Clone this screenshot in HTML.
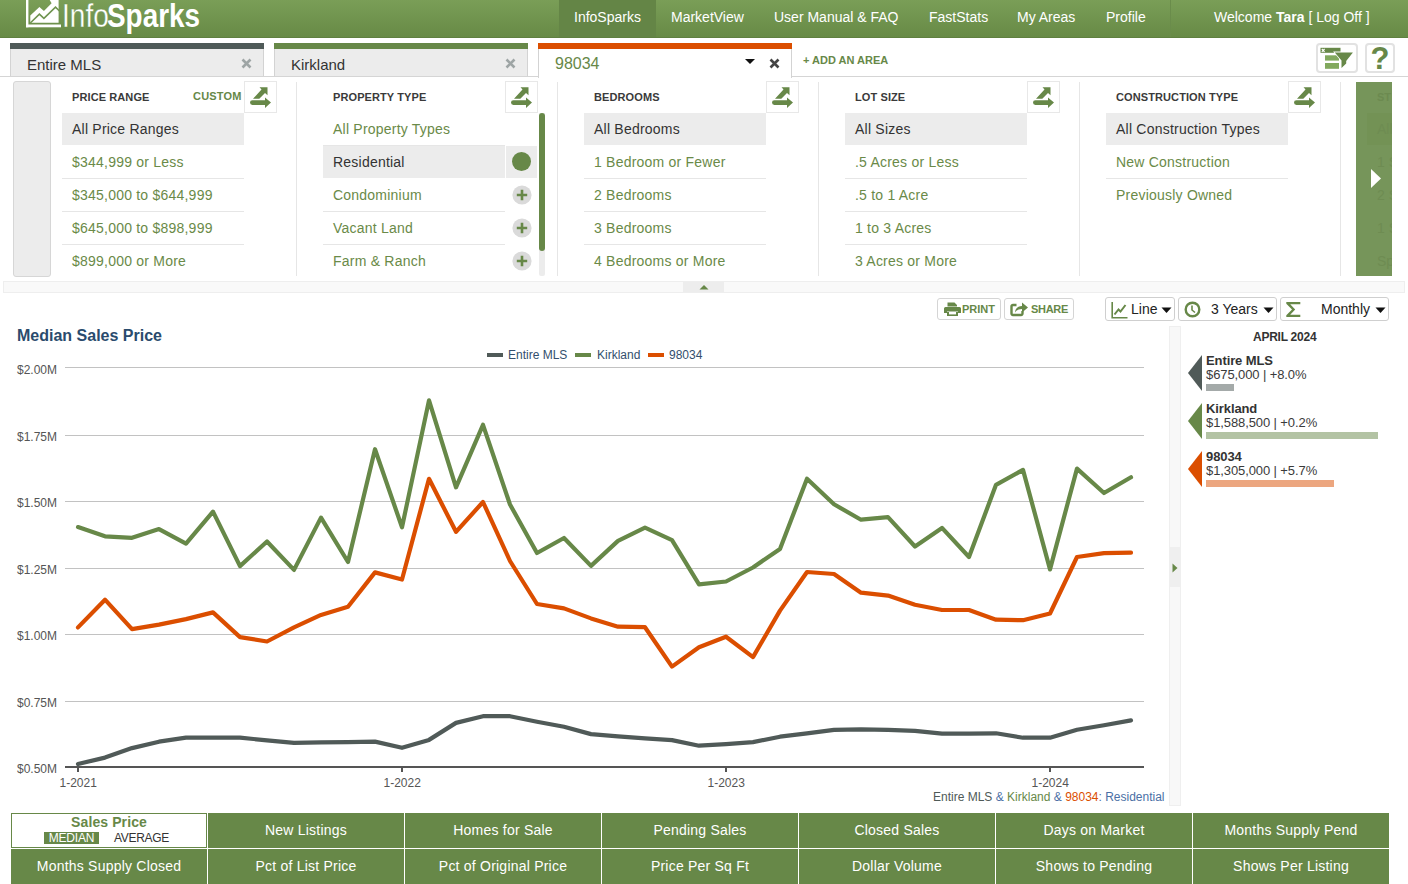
<!DOCTYPE html>
<html><head><meta charset="utf-8">
<style>
*{box-sizing:border-box;margin:0;padding:0}
html,body{width:1408px;height:884px;overflow:hidden;background:#fff;font-family:"Liberation Sans",sans-serif;color:#333}
.a{position:absolute}
#hdr{left:0;top:0;width:1408px;height:38px;background:linear-gradient(#7a9e57,#678a46);border-bottom:1px solid #5f8040}
.nav{top:0;height:37px;line-height:35px;font-size:14px;color:#fff;white-space:nowrap}
.tab{top:43px;width:254px;height:33px;border-top:6px solid #4f5a58;background:#ececec;box-shadow:inset 1px 0 #d3d3d3,inset -1px 0 #d3d3d3}
.tab span{position:absolute;left:17px;top:7px;font-size:15px;color:#333}
.tabx{position:absolute;font-size:15px;color:#9ea5a5;font-weight:bold}
.col{top:82px;height:195px}
.hd{font-size:11px;font-weight:bold;letter-spacing:.1px;color:#3a3a3a;white-space:nowrap}
.row{height:33px;line-height:33px;font-size:14px;letter-spacing:.22px;color:#6a8a48;white-space:nowrap;border-bottom:1px solid #e6e6e6;padding-left:10px}
.row.sel{background:#ececec;color:#333;border-bottom-color:#fff}
.row.last{border-bottom:none}
.ibtn{width:33px;height:32px;border:1px solid #e8e8e8;background:#fff}
.sep{width:1px;background:#e6e6e6;top:82px;height:194px}
.btn{top:298px;height:22px;border:1px solid #d5d5d5;border-radius:3px;background:#fff}
.dd{top:297px;height:24px;border:1px solid #cfcfcf;border-radius:3px;background:#fff;font-size:14px;color:#222}
.ax{font-size:12px;color:#555;white-space:nowrap}
.gb{height:35px;background:#678848;color:#fff;font-size:14px;letter-spacing:.22px;text-align:center;line-height:35px;white-space:nowrap}
</style></head><body>
<div id="hdr" class="a"></div>

<svg class="a" style="left:0;top:0" width="62" height="30" viewBox="0 0 62 30">
<rect x="26" y="0" width="2.4" height="27.3" fill="#fff"/>
<rect x="26" y="24.5" width="35" height="2.8" fill="#fff"/>
<polygon fill="#fff" points="30.3,15.5 39.4,6.9 43.9,10.9 51.6,3.2 49.7,0 58.6,0 58.6,22.8 30.3,22.8"/>
<polyline fill="none" stroke="#6f9450" stroke-width="1.6" points="30.3,23 39.4,14.2 43.9,18.3 55.5,7.2 59.5,11"/>
</svg>
<div class="a" style="left:62px;top:-4px;height:40px;white-space:nowrap;color:#fff;font-size:33px;line-height:40px;transform:scaleX(.85);transform-origin:0 0;-webkit-text-stroke:.35px #719550">Info</div>
<div class="a" style="left:107px;top:-4px;height:40px;white-space:nowrap;color:#fff;font-size:33px;line-height:40px;font-weight:bold;transform:scaleX(.845);transform-origin:0 0">Sparks</div>
<div class="a" style="left:559px;top:0;width:97px;height:37px;background:#648546"></div>
<div class="a nav" style="left:574px">InfoSparks</div>
<div class="a nav" style="left:671px">MarketView</div>
<div class="a nav" style="left:774px">User Manual &amp; FAQ</div>
<div class="a nav" style="left:929px">FastStats</div>
<div class="a nav" style="left:1017px">My Areas</div>
<div class="a nav" style="left:1106px">Profile</div>
<div class="a" style="left:1170px;top:0;width:1px;height:37px;background:#6a8c4b"></div>
<div class="a nav" style="left:1214px">Welcome <b>Tara</b> [ Log Off ]</div>

<div class="a" style="left:0;top:76px;width:1408px;height:1px;background:#d5d5d5"></div>
<div class="a tab" style="left:10px"><span>Entire MLS</span><svg class="a" style="left:231px;top:8.5px" width="11" height="11" viewBox="0 0 11 11"><path d="M1.5,1.5 L9.5,9.5 M9.5,1.5 L1.5,9.5" stroke="#9ea5a5" stroke-width="2.6"/></svg></div>
<div class="a tab" style="left:274px;border-top-color:#678848"><span>Kirkland</span><svg class="a" style="left:231px;top:8.5px" width="11" height="11" viewBox="0 0 11 11"><path d="M1.5,1.5 L9.5,9.5 M9.5,1.5 L1.5,9.5" stroke="#9ea5a5" stroke-width="2.6"/></svg></div>
<div class="a tab" style="left:538px;border-top-color:#db4e00;background:#fff;height:35px"><span style="color:#678848;font-size:16px;top:5.5px">98034</span>
<svg class="a" style="left:206px;top:9px" width="12" height="8" viewBox="0 0 12 8"><polygon points="1,1 11,1 6,6" fill="#111"/></svg>
<svg class="a" style="left:231px;top:8.5px" width="11" height="11" viewBox="0 0 11 11"><path d="M1.5,1.5 L9.5,9.5 M9.5,1.5 L1.5,9.5" stroke="#444" stroke-width="2.6"/></svg></div>
<div class="a" style="left:803px;top:54px;font-size:11px;font-weight:bold;color:#678848;letter-spacing:0;white-space:nowrap">+ ADD AN AREA</div>
<div class="a" style="left:1316px;top:43px;width:42px;height:30px;border:2px solid #e2e2e2;border-radius:4px;background:#fff">
<svg class="a" style="left:-2px;top:-2px" width="41" height="30" viewBox="0 0 41 30">
<rect x="4.5" y="4.8" width="20" height="5" fill="#678848"/>
<path d="M5.8,6 L8.6,8.8 M8.6,6 L5.8,8.8" stroke="#fff" stroke-width="1.1"/>
<rect x="9" y="12.3" width="14" height="5.3" fill="#82a95e"/>
<rect x="9" y="20" width="14" height="5.8" fill="#82a95e"/>
<polygon points="18.8,9.4 36.9,9.4 30.2,18 30.2,20.4 25.5,25 25.5,17.6" fill="#678848" stroke="#fff" stroke-width="1.6" stroke-linejoin="miter"/>
<polygon points="18.8,9.4 36.9,9.4 30.2,18 30.2,20.4 25.5,25 25.5,17.6" fill="#678848"/>
</svg></div>
<div class="a" style="left:1365px;top:43px;width:30px;height:30px;border:2px solid #e2e2e2;border-radius:4px;background:#fff;text-align:center;font-size:31px;font-weight:bold;color:#678848;line-height:28px">?</div>
<div class="a" style="left:13px;top:81px;width:38px;height:196px;background:#ececec;border:1px solid #d6d6d6;border-radius:3px"></div>
<div class="a hd" style="left:72px;top:91px">PRICE RANGE</div>
<div class="a ibtn" style="left:244px;top:81px"><svg width="33" height="32" viewBox="0 0 33 32" style="position:absolute;left:-1px;top:-1px"><polygon fill="#678848" points="9,17.8 15.3,17.8 21,12 23.5,14.2 23.5,6.3 15.5,6.3 17.5,8.5"/><path fill="#678848" d="M8.4,19.2 H21 V16.5 L27,21.6 L21,27 V24 H8.4 A2.4,2.4 0 0 1 8.4,19.2 Z"/></svg></div>
<div class="a" style="left:62px;top:113px;width:182px"><div class="row sel">All Price Ranges</div><div class="row">$344,999 or Less</div><div class="row">$345,000 to $644,999</div><div class="row">$645,000 to $898,999</div><div class="row last">$899,000 or More</div></div>
<div class="a sep" style="left:296px"></div>
<div class="a hd" style="left:333px;top:91px">PROPERTY TYPE</div>
<div class="a ibtn" style="left:505px;top:81px"><svg width="33" height="32" viewBox="0 0 33 32" style="position:absolute;left:-1px;top:-1px"><polygon fill="#678848" points="9,17.8 15.3,17.8 21,12 23.5,14.2 23.5,6.3 15.5,6.3 17.5,8.5"/><path fill="#678848" d="M8.4,19.2 H21 V16.5 L27,21.6 L21,27 V24 H8.4 A2.4,2.4 0 0 1 8.4,19.2 Z"/></svg></div>
<div class="a" style="left:323px;top:113px;width:182px"><div class="row">All Property Types</div><div class="row sel">Residential</div><div class="row">Condominium</div><div class="row">Vacant Land</div><div class="row last">Farm &amp; Ranch</div></div>
<div class="a sep" style="left:557px"></div>
<div class="a hd" style="left:594px;top:91px">BEDROOMS</div>
<div class="a ibtn" style="left:766px;top:81px"><svg width="33" height="32" viewBox="0 0 33 32" style="position:absolute;left:-1px;top:-1px"><polygon fill="#678848" points="9,17.8 15.3,17.8 21,12 23.5,14.2 23.5,6.3 15.5,6.3 17.5,8.5"/><path fill="#678848" d="M8.4,19.2 H21 V16.5 L27,21.6 L21,27 V24 H8.4 A2.4,2.4 0 0 1 8.4,19.2 Z"/></svg></div>
<div class="a" style="left:584px;top:113px;width:182px"><div class="row sel">All Bedrooms</div><div class="row">1 Bedroom or Fewer</div><div class="row">2 Bedrooms</div><div class="row">3 Bedrooms</div><div class="row last">4 Bedrooms or More</div></div>
<div class="a sep" style="left:818px"></div>
<div class="a hd" style="left:855px;top:91px">LOT SIZE</div>
<div class="a ibtn" style="left:1027px;top:81px"><svg width="33" height="32" viewBox="0 0 33 32" style="position:absolute;left:-1px;top:-1px"><polygon fill="#678848" points="9,17.8 15.3,17.8 21,12 23.5,14.2 23.5,6.3 15.5,6.3 17.5,8.5"/><path fill="#678848" d="M8.4,19.2 H21 V16.5 L27,21.6 L21,27 V24 H8.4 A2.4,2.4 0 0 1 8.4,19.2 Z"/></svg></div>
<div class="a" style="left:845px;top:113px;width:182px"><div class="row sel">All Sizes</div><div class="row">.5 Acres or Less</div><div class="row">.5 to 1 Acre</div><div class="row">1 to 3 Acres</div><div class="row last">3 Acres or More</div></div>
<div class="a sep" style="left:1079px"></div>
<div class="a hd" style="left:1116px;top:91px">CONSTRUCTION TYPE</div>
<div class="a ibtn" style="left:1288px;top:81px"><svg width="33" height="32" viewBox="0 0 33 32" style="position:absolute;left:-1px;top:-1px"><polygon fill="#678848" points="9,17.8 15.3,17.8 21,12 23.5,14.2 23.5,6.3 15.5,6.3 17.5,8.5"/><path fill="#678848" d="M8.4,19.2 H21 V16.5 L27,21.6 L21,27 V24 H8.4 A2.4,2.4 0 0 1 8.4,19.2 Z"/></svg></div>
<div class="a" style="left:1106px;top:113px;width:182px"><div class="row sel">All Construction Types</div><div class="row">New Construction</div><div class="row last">Previously Owned</div></div>
<div class="a sep" style="left:1340px"></div>
<div class="a" style="left:193px;top:90px;font-size:11px;font-weight:bold;color:#678848;letter-spacing:.2px">CUSTOM</div>
<div class="a" style="left:506px;top:146px;width:31px;height:32px;background:#ececec"></div>
<div class="a" style="left:512px;top:152px;width:19px;height:19px;border-radius:50%;background:#678848"></div>
<svg class="a" style="left:511.5px;top:185px" width="20" height="20" viewBox="0 0 20 20"><circle cx="10" cy="10" r="9.6" fill="#dadada"/><path d="M10,4.8 V15.2 M4.8,10 H15.2" stroke="#678848" stroke-width="2.6"/></svg>
<svg class="a" style="left:511.5px;top:218px" width="20" height="20" viewBox="0 0 20 20"><circle cx="10" cy="10" r="9.6" fill="#dadada"/><path d="M10,4.8 V15.2 M4.8,10 H15.2" stroke="#678848" stroke-width="2.6"/></svg>
<svg class="a" style="left:511.5px;top:251px" width="20" height="20" viewBox="0 0 20 20"><circle cx="10" cy="10" r="9.6" fill="#dadada"/><path d="M10,4.8 V15.2 M4.8,10 H15.2" stroke="#678848" stroke-width="2.6"/></svg>
<div class="a" style="left:539px;top:113px;width:6px;height:163px;background:#ececec;border-radius:0 0 2px 2px"></div>
<div class="a" style="left:539px;top:113px;width:6px;height:138px;background:#678848;border-radius:3px"></div>
<div class="a" style="left:1356px;top:82px;width:36px;height:194px;background:#76955a;overflow:hidden;white-space:nowrap">
<div class="a" style="left:21px;top:9px;font-size:11px;font-weight:bold;color:#6c8a50">ST</div>
<div class="a" style="left:11px;top:31px;width:30px;height:32px;background:#739255"></div>
<div class="a" style="left:21px;top:39px;font-size:14px;color:#6e8c52">All</div>
<div class="a" style="left:21px;top:72px;font-size:14px;color:#6e8c52">1 S</div>
<div class="a" style="left:21px;top:105px;font-size:14px;color:#6e8c52">2 S</div>
<div class="a" style="left:21px;top:138px;font-size:14px;color:#6e8c52">1 S</div>
<div class="a" style="left:21px;top:171px;font-size:14px;color:#6e8c52">Sp</div>
<svg class="a" style="left:14px;top:86px" width="12" height="22" viewBox="0 0 12 22"><polygon points="1,1 11,10.5 1,20" fill="#fff"/></svg>
</div>
<div class="a" style="left:3px;top:281px;width:1402px;height:12px;background:#f9f9f9;border:1px solid #eeeeee"></div>
<div class="a" style="left:683px;top:282px;width:41px;height:10px;background:#ededed"></div>
<svg class="a" style="left:699px;top:284px" width="10" height="6" viewBox="0 0 10 6"><polygon points="0.5,5.5 9.5,5.5 5,1" fill="#678848"/></svg>

<div class="a btn" style="left:937px;width:64px">
<svg class="a" style="left:6px;top:2px" width="18" height="16" viewBox="0 0 18 16"><path fill="#678848" d="M3.5,1.5 H10.5 L13,4 V5.5 H3.5 Z M1.5,6 H15.5 A1.5,1.5 0 0 1 17,7.5 V12 H14 V10 H3 V12 H0 V7.5 A1.5,1.5 0 0 1 1.5,6 Z M3,10.5 H14 V15 H3 Z"/><rect x="5" y="11" width="7" height="2.4" fill="#fff"/></svg>
<div class="a" style="left:24px;top:4px;font-size:11px;font-weight:bold;color:#678848;letter-spacing:0">PRINT</div></div>
<div class="a btn" style="left:1004px;width:70px">
<svg class="a" style="left:5px;top:2px" width="19" height="16" viewBox="0 0 19 16"><path fill="none" stroke="#678848" stroke-width="2.4" d="M6.5,4 H3 A1.5,1.5 0 0 0 1.5,5.5 V12.5 A1.5,1.5 0 0 0 3,14 H11 A1.5,1.5 0 0 0 12.5,12.5 V10"/><path fill="#678848" d="M5,11.5 C5.5,7 8.5,5 12,5 V1.5 L18,6.5 L12,11.5 V8 C9,8 6.8,9 5,11.5 Z"/></svg>
<div class="a" style="left:26px;top:4px;font-size:11px;font-weight:bold;color:#678848;letter-spacing:-.3px">SHARE</div></div>
<div class="a dd" style="left:1105px;width:70px">
<svg class="a" style="left:5px;top:4px" width="17" height="17" viewBox="0 0 17 17"><path d="M1.2,0 V15.8 H16.5" fill="none" stroke="#678848" stroke-width="1.6"/><polyline points="3.5,12.5 7.5,7.5 9.5,9.5 14.5,3" fill="none" stroke="#678848" stroke-width="2"/></svg>
<div class="a" style="left:25px;top:3px">Line</div>
<svg class="a" style="left:55px;top:9px" width="11" height="7" viewBox="0 0 11 7"><polygon points="0.5,0.5 10.5,0.5 5.5,6" fill="#111"/></svg></div>
<div class="a dd" style="left:1178px;width:99px">
<svg class="a" style="left:5px;top:3px" width="17" height="17" viewBox="0 0 17 17"><circle cx="8.5" cy="8.5" r="6.8" fill="none" stroke="#678848" stroke-width="2.4"/><path d="M8,4.5 V9 L11,11.5" fill="none" stroke="#678848" stroke-width="1.6"/></svg>
<div class="a" style="left:32px;top:3px">3 Years</div>
<svg class="a" style="left:84px;top:9px" width="11" height="7" viewBox="0 0 11 7"><polygon points="0.5,0.5 10.5,0.5 5.5,6" fill="#111"/></svg></div>
<div class="a dd" style="left:1280px;width:109px">
<svg class="a" style="left:4px;top:2px" width="17" height="18" viewBox="0 0 17 18"><polygon fill="#678848" points="1.3,2 15.3,2 15.3,4.3 5.2,4.3 10.2,9.5 5.2,14.7 15.3,14.7 15.3,17 1.3,17 1.3,15.3 7,9.5 1.3,3.7"/></svg>
<div class="a" style="left:40px;top:3px">Monthly</div>
<svg class="a" style="left:94px;top:9px" width="11" height="7" viewBox="0 0 11 7"><polygon points="0.5,0.5 10.5,0.5 5.5,6" fill="#111"/></svg></div>

<div class="a" style="left:17px;top:327px;font-size:16px;font-weight:bold;color:#2a4b6d">Median Sales Price</div>
<div class="a" style="left:487px;top:353px;width:16px;height:4px;background:#505a58"></div>
<div class="a" style="left:508px;top:348px;font-size:12px;color:#334f6d">Entire MLS</div>
<div class="a" style="left:575px;top:353px;width:16px;height:4px;background:#678848"></div>
<div class="a" style="left:597px;top:348px;font-size:12px;color:#334f6d">Kirkland</div>
<div class="a" style="left:648px;top:353px;width:16px;height:4px;background:#db4e00"></div>
<div class="a" style="left:669px;top:348px;font-size:12px;color:#334f6d">98034</div>

<svg class="a" style="left:0;top:0" width="1160" height="884" viewBox="0 0 1160 884">
<g stroke="#c2c2c2" stroke-width="1"><line x1="65" y1="367.5" x2="1144" y2="367.5"/><line x1="65" y1="435.5" x2="1144" y2="435.5"/><line x1="65" y1="501.5" x2="1144" y2="501.5"/><line x1="65" y1="568.5" x2="1144" y2="568.5"/><line x1="65" y1="634.5" x2="1144" y2="634.5"/><line x1="65" y1="701.5" x2="1144" y2="701.5"/></g>
<line x1="65" y1="767" x2="1144" y2="767" stroke="#555" stroke-width="2.2"/>
<g stroke="#555" stroke-width="2"><line x1="78" y1="767" x2="78" y2="772"/><line x1="402" y1="767" x2="402" y2="772"/><line x1="726" y1="767" x2="726" y2="772"/><line x1="1050" y1="767" x2="1050" y2="772"/></g>
<g fill="none" stroke-width="4.2" stroke-linejoin="round" stroke-linecap="round">
<polyline stroke="#505a58" points="78,764.0 105,757.6 132,748.1 159,741.7 186,737.7 213,737.7 240,737.7 267,740.3 294,742.9 321,742.3 348,742.1 375,741.6 402,747.8 429,739.9 456,722.9 483,716.2 510,716.2 537,721.7 564,726.7 591,734.1 618,736.3 645,738.3 672,740.1 699,745.7 726,744.1 753,742.1 780,736.7 807,733.3 834,729.8 861,729.4 888,729.8 915,730.8 942,733.7 969,733.7 996,733.3 1023,737.7 1050,737.7 1077,729.8 1104,725.2 1131,720.4"/>
<polyline stroke="#678848" points="78,527.1 105,536.3 132,537.8 159,529.1 186,543.7 213,511.6 240,566.1 267,541.5 294,569.9 321,517.6 348,562.0 375,449.2 402,527.3 429,400.4 456,487.3 483,424.8 510,504.5 537,553.0 564,538.0 591,565.9 618,540.9 645,527.7 672,540.1 699,584.4 726,581.5 753,567.5 780,548.9 807,478.7 834,504.3 861,519.7 888,517.2 915,546.5 942,527.9 969,557.0 996,484.8 1023,469.9 1050,569.4 1077,468.6 1104,493.0 1131,477.3"/>
<polyline stroke="#db4e00" points="78,627.4 105,599.7 132,629.1 159,624.6 186,619.1 213,612.4 240,637.1 267,641.5 294,627.4 321,614.9 348,606.7 375,572.4 402,579.5 429,478.8 456,531.8 483,502.0 510,561.0 537,604.0 564,608.4 591,618.4 618,626.7 645,627.2 672,666.6 699,647.2 726,636.7 753,657.1 780,610.6 807,572.0 834,574.0 861,592.7 888,595.6 915,604.8 942,610.0 969,610.0 996,619.7 1023,620.2 1050,613.5 1077,557.0 1104,553.2 1131,552.7"/>
</g>
</svg>
<div class="a ax" style="left:17px;top:363px">$2.00M</div>
<div class="a ax" style="left:17px;top:430px">$1.75M</div>
<div class="a ax" style="left:17px;top:496px">$1.50M</div>
<div class="a ax" style="left:17px;top:563px">$1.25M</div>
<div class="a ax" style="left:17px;top:629px">$1.00M</div>
<div class="a ax" style="left:17px;top:696px">$0.75M</div>
<div class="a ax" style="left:17px;top:762px">$0.50M</div>
<div class="a ax" style="left:59.5px;top:776px">1-2021</div>
<div class="a ax" style="left:383.5px;top:776px">1-2022</div>
<div class="a ax" style="left:707.5px;top:776px">1-2023</div>
<div class="a ax" style="left:1031.5px;top:776px">1-2024</div>
<div class="a" style="left:933px;top:790px;font-size:12px;color:#4f5a58;white-space:nowrap">Entire MLS <span style="color:#4a6fa5">&amp;</span> <span style="color:#678848">Kirkland</span> <span style="color:#4a6fa5">&amp;</span> <span style="color:#db4e00">98034</span><span style="color:#4a6fa5">: Residential</span></div>

<div class="a" style="left:1169px;top:326px;width:12px;height:480px;background:#f8f8f8;border:1px solid #efefef"></div>
<div class="a" style="left:1170px;top:547px;width:10px;height:40px;background:#efefef"></div>
<svg class="a" style="left:1172px;top:563px" width="6" height="10" viewBox="0 0 6 10"><polygon points="0.5,0.5 5.5,5 0.5,9.5" fill="#678848"/></svg>

<div class="a" style="left:1253px;top:330px;font-size:12px;font-weight:bold;color:#333;letter-spacing:-.25px">APRIL 2024</div>
<svg class="a" style="left:1187px;top:354px" width="16" height="140" viewBox="0 0 16 140">
<polygon points="15,1 15,37 1,19" fill="#505a58"/>
<polygon points="15,49 15,85 1,67" fill="#678848"/>
<polygon points="15,97 15,133 1,115" fill="#db4e00"/>
</svg>
<div class="a" style="left:1206px;top:353px;font-size:13px;font-weight:bold;color:#333;line-height:16px;letter-spacing:-.1px">Entire MLS</div>
<div class="a" style="left:1206px;top:368px;font-size:13px;color:#3a3a3a;line-height:14px;letter-spacing:-.1px">$675,000 | +8.0%</div>
<div class="a" style="left:1206px;top:384px;width:28px;height:7px;background:#a4aaa9"></div>
<div class="a" style="left:1206px;top:401px;font-size:13px;font-weight:bold;color:#333;line-height:16px;letter-spacing:-.1px">Kirkland</div>
<div class="a" style="left:1206px;top:416px;font-size:13px;color:#3a3a3a;line-height:14px;letter-spacing:-.1px">$1,588,500 | +0.2%</div>
<div class="a" style="left:1206px;top:432px;width:172px;height:7px;background:#b3c3a4"></div>
<div class="a" style="left:1206px;top:449px;font-size:13px;font-weight:bold;color:#333;line-height:16px;letter-spacing:-.1px">98034</div>
<div class="a" style="left:1206px;top:464px;font-size:13px;color:#3a3a3a;line-height:14px;letter-spacing:-.1px">$1,305,000 | +5.7%</div>
<div class="a" style="left:1206px;top:480px;width:128px;height:7px;background:#eca67f"></div>
<div class="a" style="left:11px;top:813px;width:196px;height:35px;border:1px solid #678848;background:#fff">
<div class="a" style="left:0;top:0;width:194px;text-align:center;font-size:14px;font-weight:bold;color:#678848;letter-spacing:.1px">Sales Price</div>
<div class="a" style="left:32px;top:18px;width:55px;height:12px;background:#678848;color:#fff;font-size:12px;line-height:12px;text-align:center;letter-spacing:-.2px">MEDIAN</div>
<div class="a" style="left:102px;top:17px;font-size:12px;color:#333;line-height:14px;letter-spacing:-.3px">AVERAGE</div></div>
<div class="a gb" style="left:208px;top:813px;width:196px">New Listings</div>
<div class="a gb" style="left:405px;top:813px;width:196px">Homes for Sale</div>
<div class="a gb" style="left:602px;top:813px;width:196px">Pending Sales</div>
<div class="a gb" style="left:799px;top:813px;width:196px">Closed Sales</div>
<div class="a gb" style="left:996px;top:813px;width:196px">Days on Market</div>
<div class="a gb" style="left:1193px;top:813px;width:196px">Months Supply Pend</div>
<div class="a gb" style="left:11px;top:849px;width:196px">Months Supply Closed</div>
<div class="a gb" style="left:208px;top:849px;width:196px">Pct of List Price</div>
<div class="a gb" style="left:405px;top:849px;width:196px">Pct of Original Price</div>
<div class="a gb" style="left:602px;top:849px;width:196px">Price Per Sq Ft</div>
<div class="a gb" style="left:799px;top:849px;width:196px">Dollar Volume</div>
<div class="a gb" style="left:996px;top:849px;width:196px">Shows to Pending</div>
<div class="a gb" style="left:1193px;top:849px;width:196px">Shows Per Listing</div>
</body></html>
